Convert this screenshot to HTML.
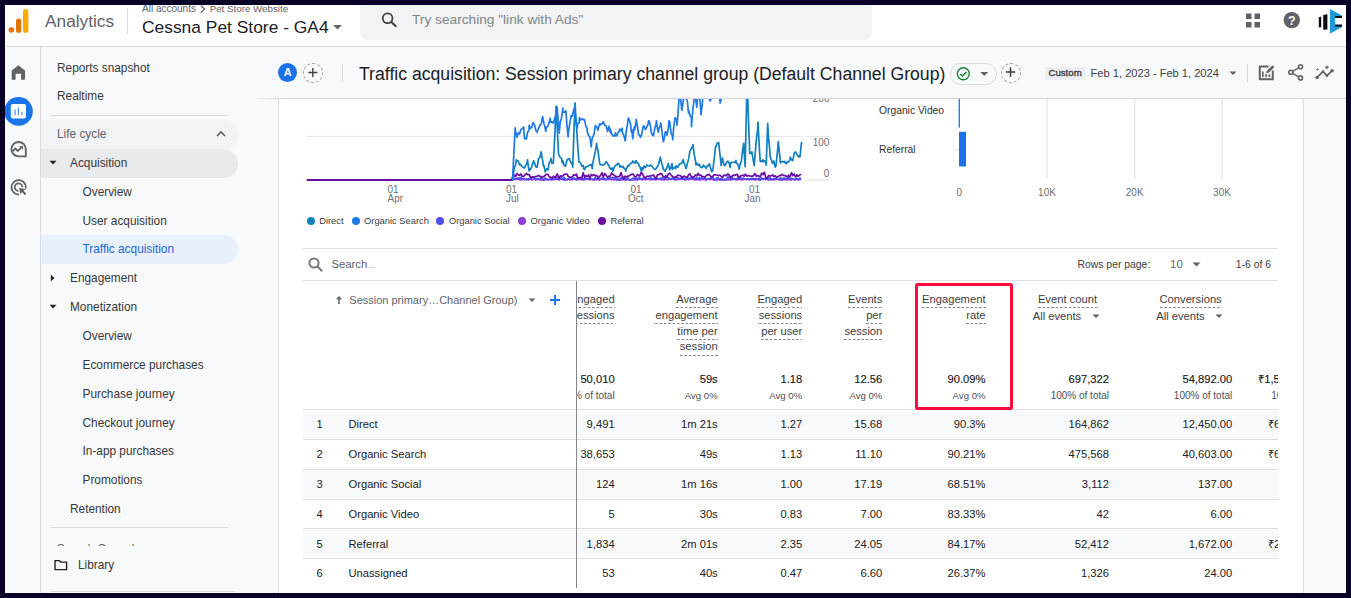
<!DOCTYPE html>
<html><head><meta charset="utf-8"><style>
html,body{margin:0;padding:0;}
body{width:1351px;height:598px;position:relative;overflow:hidden;background:#fff;font-family:"Liberation Sans",sans-serif;}
.t{position:absolute;white-space:nowrap;font-family:"Liberation Sans",sans-serif;}
svg{overflow:visible}
</style></head><body>
<div style="position:absolute;left:0;top:0;width:1351px;height:46px;background:#fff;"></div>
<div style="position:absolute;left:0;top:46px;width:1351px;height:1px;background:#dadce0;"></div>
<svg style="position:absolute;left:0;top:0" width="40" height="46">
<circle cx="11.3" cy="29.9" r="2.75" fill="#e37400"/>
<rect x="16" y="18.4" width="5.3" height="14.4" rx="2.65" fill="#e37400"/>
<rect x="23" y="8.9" width="5.4" height="24" rx="2.7" fill="#f9ab00"/>
</svg>
<div class="t" style="left:45px;top:10.00px;font-size:17.3px;line-height:22px;color:#5f6368;font-weight:normal;">Analytics</div>

<div style="position:absolute;left:127px;top:8px;width:1px;height:26px;background:#dadce0;"></div>
<div class="t" style="left:142px;top:3.00px;font-size:10px;line-height:12px;color:#5f6368;font-weight:normal;">All accounts</div>

<svg style="position:absolute;left:0;top:0" width="300" height="40"><path d="M200.9 5.8 L204.6 9.1 L200.9 12.4" fill="none" stroke="#5f6368" stroke-width="1.3"/></svg>
<div class="t" style="left:209.7px;top:3.00px;font-size:9.75px;line-height:12px;color:#5f6368;font-weight:normal;">Pet Store Website</div>

<div class="t" style="left:142px;top:15.50px;font-size:17.4px;line-height:22px;color:#202124;font-weight:normal;">Cessna Pet Store - GA4</div>

<svg style="position:absolute;left:333px;top:25px" width="10" height="6"><path d="M0 0h9l-4.5 4.5z" fill="#5f6368"/></svg>
<div style="position:absolute;left:360px;top:0px;width:512px;height:40px;background:#f1f3f4;border-radius:0 0 8px 8px;"></div>
<svg style="position:absolute;left:0;top:0" width="420" height="40"><circle cx="387.6" cy="18.3" r="4.9" fill="none" stroke="#3c4043" stroke-width="1.8"/><path d="M391.1 21.8 L395.7 26.3" stroke="#3c4043" stroke-width="1.9" stroke-linecap="round"/></svg>
<div class="t" style="left:412px;top:10.50px;font-size:13.7px;line-height:18px;color:#80868b;font-weight:normal;">Try searching "link with Ads"</div>

<svg style="position:absolute;left:1244px;top:11px" width="18" height="20">
<rect x="2" y="2.5" width="5.5" height="5.5" fill="#5f6368"/><rect x="10.5" y="2.5" width="5.5" height="5.5" fill="#5f6368"/>
<rect x="2" y="11" width="5.5" height="5.5" fill="#5f6368"/><rect x="10.5" y="11" width="5.5" height="5.5" fill="#5f6368"/></svg>
<svg style="position:absolute;left:1282px;top:10px" width="20" height="20">
<circle cx="9.8" cy="10.1" r="8.2" fill="#5f6368"/>
<text x="9.8" y="14.6" text-anchor="middle" font-family="Liberation Sans" font-weight="bold" font-size="12.5" fill="#fff">?</text></svg>
<svg style="position:absolute;left:1310px;top:5px" width="40" height="35">
<path d="M8.8 12.2 L11.2 11.4 L11.2 22.3 L8.8 22.6 Z" fill="#0d0a14"/>
<path d="M13.2 10.0 L17.4 9.2 L17.4 24.4 L13.2 24.8 Z" fill="#0d0a14"/>
<path d="M20 4 L32 10.5 L32 12.8 L25 12.8 L25 19.8 L32 19.8 L32 22 L20 28.7 Z" fill="#1e9bd7"/>
<rect x="25" y="11" width="7" height="2" fill="#0d0a14"/>
<rect x="25" y="19.6" width="7" height="2" fill="#0d0a14"/>
</svg>
<div style="position:absolute;left:0;top:47px;width:40px;height:551px;background:#f8f9fa;"></div>
<div style="position:absolute;left:40px;top:47px;width:1px;height:551px;background:#dadce0;"></div>
<svg style="position:absolute;left:0;top:0" width="40" height="200"><path fill="#5f6368" d="M18.35 65.2 L11.7 70.4 V79.8 H15.6 V73.8 H21.1 V79.8 H25 V70.4 Z"/></svg>
<svg style="position:absolute;left:0;top:0" width="40" height="200">
<circle cx="18.5" cy="111.4" r="14.3" fill="#1a73e8"/>
<rect x="10.8" y="103.9" width="15.2" height="14.5" rx="2" fill="#fff"/>
<rect x="14.5" y="109.6" width="1.2" height="5.5" fill="#4c8ff0"/>
<rect x="17.8" y="107.4" width="1.2" height="7.7" fill="#4c8ff0"/>
<rect x="21.3" y="111.8" width="1.2" height="3.3" fill="#4c8ff0"/></svg>
<svg style="position:absolute;left:0;top:0" width="40" height="200">
<path d="M25.8 149.2 A7.2 7.2 0 1 0 18.6 156.4 H25.8 Z" fill="none" stroke="#5f6368" stroke-width="1.9" stroke-linejoin="round"/>
<path d="M12.6 151.4 L15.3 148.6 L17.8 151 L21.2 147.6" fill="none" stroke="#5f6368" stroke-width="1.8"/>
<path d="M19.2 146 H22.9 V149.7 Z" fill="#5f6368"/></svg>
<svg style="position:absolute;left:0;top:0" width="40" height="200">
<path d="M25.8 188.6 A7.2 7.2 0 1 0 18.9 194.5" fill="none" stroke="#5f6368" stroke-width="1.8"/>
<path d="M22.4 187.2 A3.8 3.8 0 1 0 18.3 191" fill="none" stroke="#5f6368" stroke-width="1.8"/>
<path d="M19 187.7 L26.4 189.4 L23.4 190.6 L26.3 193.8 L25 195.2 L22 192 L20.6 194.6 Z" fill="#5f6368"/></svg>
<div style="position:absolute;left:41px;top:47px;width:237px;height:551px;background:#f8f9fa;"></div>
<div style="position:absolute;left:278px;top:98px;width:1px;height:500px;background:#dadce0;"></div>
<div class="t" style="left:57px;top:60.00px;font-size:11.85px;line-height:16px;color:#36383b;font-weight:normal;">Reports snapshot</div>

<div class="t" style="left:57px;top:88.00px;font-size:11.85px;line-height:16px;color:#36383b;font-weight:normal;">Realtime</div>

<div style="position:absolute;left:51px;top:115px;width:177px;height:1px;background:#dadce0;"></div>
<div style="position:absolute;left:41px;top:120px;width:197px;height:28.5px;background:#f1f3f4;border-radius:0 15px 15px 0;"></div>
<div class="t" style="left:57px;top:126.00px;font-size:11.85px;line-height:16px;color:#5f6368;font-weight:normal;">Life cycle</div>

<svg style="position:absolute;left:215px;top:129px" width="12" height="9"><path d="M2 7 L6 3 L10 7" fill="none" stroke="#5f6368" stroke-width="1.6"/></svg>
<div style="position:absolute;left:41px;top:149px;width:197px;height:28.5px;background:#e8eaed;border-radius:0 15px 15px 0;"></div>
<svg style="position:absolute;left:49px;top:160px" width="8" height="6"><path d="M0.5 0.8h7l-3.5 3.7z" fill="#202124"/></svg>
<div class="t" style="left:70px;top:155.00px;font-size:11.85px;line-height:16px;color:#36383b;font-weight:normal;">Acquisition</div>

<div class="t" style="left:82.5px;top:184.00px;font-size:11.85px;line-height:16px;color:#36383b;font-weight:normal;">Overview</div>

<div class="t" style="left:82.5px;top:213.00px;font-size:11.85px;line-height:16px;color:#36383b;font-weight:normal;">User acquisition</div>

<div style="position:absolute;left:41px;top:235px;width:197px;height:28.5px;background:#e8f0fe;border-radius:0 15px 15px 0;"></div>
<div class="t" style="left:82.5px;top:241.00px;font-size:11.85px;line-height:16px;color:#1967d2;font-weight:normal;">Traffic acquisition</div>

<svg style="position:absolute;left:50px;top:274px" width="6" height="8"><path d="M0.8 0.5v7l3.7-3.5z" fill="#202124"/></svg>
<div class="t" style="left:70px;top:270.00px;font-size:11.85px;line-height:16px;color:#36383b;font-weight:normal;">Engagement</div>

<svg style="position:absolute;left:49px;top:304px" width="8" height="6"><path d="M0.5 0.8h7l-3.5 3.7z" fill="#202124"/></svg>
<div class="t" style="left:70px;top:299.00px;font-size:11.85px;line-height:16px;color:#36383b;font-weight:normal;">Monetization</div>

<div class="t" style="left:82.5px;top:328.00px;font-size:11.85px;line-height:16px;color:#36383b;font-weight:normal;">Overview</div>

<div class="t" style="left:82.5px;top:356.85px;font-size:11.85px;line-height:16px;color:#36383b;font-weight:normal;">Ecommerce purchases</div>

<div class="t" style="left:82.5px;top:385.70px;font-size:11.85px;line-height:16px;color:#36383b;font-weight:normal;">Purchase journey</div>

<div class="t" style="left:82.5px;top:414.55px;font-size:11.85px;line-height:16px;color:#36383b;font-weight:normal;">Checkout journey</div>

<div class="t" style="left:82.5px;top:443.40px;font-size:11.85px;line-height:16px;color:#36383b;font-weight:normal;">In-app purchases</div>

<div class="t" style="left:82.5px;top:472.25px;font-size:11.85px;line-height:16px;color:#36383b;font-weight:normal;">Promotions</div>

<div class="t" style="left:70px;top:501.00px;font-size:11.85px;line-height:16px;color:#36383b;font-weight:normal;">Retention</div>

<div style="position:absolute;left:51px;top:527px;width:177px;height:1px;background:#dadce0;"></div>
<div style="position:absolute;left:41px;top:530px;width:237px;height:16.3px;overflow:hidden;"><div class="t" style="left:15.7px;top:11.30px;font-size:11.85px;line-height:16px;color:#5f6368;font-weight:normal;">Search Console</div>
</div>
<svg style="position:absolute;left:53px;top:558px" width="16" height="14" viewBox="0 0 16 14"><path d="M2 2.6 H6.3 L7.8 4.1 H13.6 V11.6 H2 Z" fill="none" stroke="#202124" stroke-width="1.4" stroke-linejoin="round"/></svg>
<div class="t" style="left:78px;top:556.50px;font-size:11.85px;line-height:16px;color:#36383b;font-weight:normal;">Library</div>

<div style="position:absolute;left:51px;top:591px;width:184px;height:1px;background:#dadce0;"></div>
<div style="position:absolute;left:279px;top:98px;width:1024px;height:500px;background:#fff;"></div>
<div style="position:absolute;left:1303px;top:98px;width:1px;height:500px;background:#dadce0;"></div>
<div style="position:absolute;left:1304px;top:98px;width:47px;height:500px;background:#f8f9fa;"></div>
<svg style="position:absolute;left:0;top:0" width="1351" height="598">
<defs><clipPath id="cc"><rect x="300" y="98" width="510" height="90"/></clipPath></defs>
<line x1="306.7" y1="136.3" x2="801.5" y2="136.3" stroke="#e0e0e0" stroke-width="1"/>
<line x1="805" y1="136.3" x2="829.5" y2="136.3" stroke="#e0e0e0" stroke-width="1"/>
<line x1="805" y1="180.2" x2="829.5" y2="180.2" stroke="#e0e0e0" stroke-width="1"/>
<line x1="805" y1="98.5" x2="829.5" y2="98.5" stroke="#e0e0e0" stroke-width="1"/>
<g stroke="#e0e0e0" stroke-width="1"><line x1="387.5" y1="180" x2="387.5" y2="184"/><line x1="511" y1="180" x2="511" y2="184"/><line x1="635" y1="180" x2="635" y2="184"/><line x1="759" y1="180" x2="759" y2="184"/></g>
<g clip-path="url(#cc)" fill="none" stroke-linejoin="round" stroke-width="1.7">
<polyline points="307.2,180.0 308.6,180.0 309.9,180.0 311.3,180.0 312.6,180.0 314.0,180.0 315.3,180.0 316.7,180.0 318.0,180.0 319.4,180.0 320.7,180.0 322.1,180.0 323.4,180.0 324.8,180.0 326.1,180.0 327.5,180.0 328.8,180.0 330.2,180.0 331.5,180.0 332.9,180.0 334.3,180.0 335.6,180.0 337.0,180.0 338.3,180.0 339.7,180.0 341.0,180.0 342.4,180.0 343.7,180.0 345.1,180.0 346.4,180.0 347.8,180.0 349.1,180.0 350.5,180.0 351.8,180.0 353.2,180.0 354.5,180.0 355.9,180.0 357.2,180.0 358.6,180.0 360.0,180.0 361.3,180.0 362.7,180.0 364.0,180.0 365.4,180.0 366.7,180.0 368.1,180.0 369.4,180.0 370.8,180.0 372.1,180.0 373.5,180.0 374.8,180.0 376.2,180.0 377.5,180.0 378.9,180.0 380.2,180.0 381.6,180.0 383.0,180.0 384.3,180.0 385.7,180.0 387.0,180.0 388.4,180.0 389.7,180.0 391.1,180.0 392.4,180.0 393.8,180.0 395.1,180.0 396.5,180.0 397.8,180.0 399.2,180.0 400.5,180.0 401.9,180.0 403.2,180.0 404.6,180.0 405.9,180.0 407.3,180.0 408.7,180.0 410.0,180.0 411.4,180.0 412.7,180.0 414.1,180.0 415.4,180.0 416.8,180.0 418.1,180.0 419.5,180.0 420.8,180.0 422.2,180.0 423.5,180.0 424.9,180.0 426.2,180.0 427.6,180.0 428.9,180.0 430.3,180.0 431.6,180.0 433.0,180.0 434.4,180.0 435.7,180.0 437.1,180.0 438.4,180.0 439.8,180.0 441.1,180.0 442.5,180.0 443.8,180.0 445.2,180.0 446.5,180.0 447.9,180.0 449.2,180.0 450.6,180.0 451.9,180.0 453.3,180.0 454.6,180.0 456.0,180.0 457.3,180.0 458.7,180.0 460.1,180.0 461.4,180.0 462.8,180.0 464.1,180.0 465.5,180.0 466.8,180.0 468.2,180.0 469.5,180.0 470.9,180.0 472.2,180.0 473.6,180.0 474.9,180.0 476.3,180.0 477.6,180.0 479.0,180.0 480.3,180.0 481.7,180.0 483.1,180.0 484.4,180.0 485.8,180.0 487.1,180.0 488.5,180.0 489.8,180.0 491.2,180.0 492.5,180.0 493.9,180.0 495.2,180.0 496.6,180.0 497.9,180.0 499.3,180.0 500.6,180.0 502.0,180.0 503.3,180.0 504.7,180.0 506.0,180.0 507.4,180.0 508.8,180.0 510.1,180.0 511.5,180.0 512.8,179.4 514.2,179.6 515.5,179.2 516.9,179.2 518.2,179.2 519.6,179.8 520.9,180.0 522.3,179.3 523.6,179.5 525.0,179.7 526.3,179.4 527.7,179.7 529.0,179.8 530.4,178.9 531.7,180.0 533.1,179.3 534.5,179.2 535.8,178.9 537.2,179.5 538.5,179.4 539.9,179.9 541.2,179.6 542.6,180.0 543.9,179.8 545.3,179.6 546.6,179.6 548.0,179.7 549.3,179.2 550.7,180.0 552.0,179.5 553.4,179.7 554.7,179.5 556.1,179.5 557.4,178.9 558.8,179.9 560.2,179.1 561.5,179.1 562.9,179.6 564.2,179.8 565.6,180.0 566.9,179.9 568.3,178.9 569.6,180.0 571.0,179.4 572.3,179.8 573.7,178.9 575.0,179.5 576.4,180.0 577.7,179.7 579.1,179.5 580.4,179.5 581.8,179.9 583.2,179.7 584.5,179.7 585.9,179.4 587.2,179.5 588.6,179.5 589.9,179.8 591.3,179.3 592.6,179.8 594.0,179.9 595.3,179.7 596.7,179.7 598.0,179.7 599.4,180.0 600.7,179.1 602.1,179.3 603.4,179.1 604.8,179.7 606.1,179.3 607.5,179.5 608.9,179.6 610.2,178.9 611.6,179.8 612.9,179.4 614.3,180.0 615.6,179.4 617.0,179.6 618.3,179.9 619.7,179.8 621.0,180.0 622.4,179.9 623.7,179.5 625.1,180.0 626.4,179.2 627.8,179.2 629.1,179.8 630.5,180.0 631.8,180.0 633.2,180.0 634.6,179.8 635.9,178.8 637.3,180.0 638.6,179.3 640.0,179.1 641.3,179.9 642.7,179.7 644.0,179.3 645.4,179.8 646.7,179.1 648.1,178.8 649.4,179.6 650.8,179.8 652.1,179.4 653.5,179.4 654.8,179.8 656.2,179.6 657.5,179.5 658.9,179.4 660.3,179.2 661.6,179.7 663.0,180.0 664.3,180.0 665.7,178.9 667.0,179.7 668.4,179.7 669.7,178.7 671.1,179.2 672.4,178.8 673.8,179.6 675.1,179.8 676.5,179.7 677.8,179.3 679.2,179.4 680.5,179.4 681.9,178.8 683.3,179.1 684.6,179.9 686.0,179.4 687.3,179.4 688.7,179.8 690.0,178.8 691.4,179.2 692.7,179.0 694.1,179.7 695.4,180.0 696.8,179.3 698.1,179.6 699.5,179.8 700.8,179.6 702.2,179.5 703.5,179.5 704.9,179.6 706.2,179.4 707.6,178.5 709.0,179.2 710.3,179.7 711.7,178.9 713.0,179.7 714.4,180.0 715.7,180.0 717.1,180.0 718.4,179.2 719.8,179.9 721.1,180.0 722.5,179.8 723.8,179.6 725.2,180.0 726.5,179.8 727.9,179.6 729.2,179.3 730.6,179.9 731.9,179.4 733.3,179.5 734.7,179.4 736.0,179.8 737.4,180.0 738.7,179.2 740.1,179.4 741.4,179.8 742.8,179.8 744.1,179.3 745.5,178.9 746.8,179.4 748.2,178.7 749.5,179.5 750.9,179.4 752.2,179.4 753.6,179.2 754.9,180.0 756.3,179.5 757.6,179.1 759.0,180.0 760.4,179.5 761.7,179.3 763.1,179.0 764.4,179.0 765.8,179.6 767.1,178.8 768.5,180.0 769.8,180.0 771.2,179.1 772.5,179.3 773.9,180.0 775.2,179.2 776.6,179.3 777.9,179.3 779.3,179.7 780.6,180.0 782.0,180.0 783.4,179.6 784.7,179.6 786.1,179.7 787.4,179.8 788.8,179.2 790.1,180.0 791.5,179.8 792.8,178.9 794.2,179.8 795.5,179.8 796.9,179.2 798.2,180.0 799.6,179.0 800.9,180.0" stroke="#9334e6"/>
<polyline points="307.2,180.0 308.6,180.0 309.9,180.0 311.3,180.0 312.6,180.0 314.0,180.0 315.3,180.0 316.7,180.0 318.0,180.0 319.4,180.0 320.7,180.0 322.1,180.0 323.4,180.0 324.8,180.0 326.1,180.0 327.5,180.0 328.8,180.0 330.2,180.0 331.5,180.0 332.9,180.0 334.3,180.0 335.6,180.0 337.0,180.0 338.3,180.0 339.7,180.0 341.0,180.0 342.4,180.0 343.7,180.0 345.1,180.0 346.4,180.0 347.8,180.0 349.1,180.0 350.5,180.0 351.8,180.0 353.2,180.0 354.5,180.0 355.9,180.0 357.2,180.0 358.6,180.0 360.0,180.0 361.3,180.0 362.7,180.0 364.0,180.0 365.4,180.0 366.7,180.0 368.1,180.0 369.4,180.0 370.8,180.0 372.1,180.0 373.5,180.0 374.8,180.0 376.2,180.0 377.5,180.0 378.9,180.0 380.2,180.0 381.6,180.0 383.0,180.0 384.3,180.0 385.7,180.0 387.0,180.0 388.4,180.0 389.7,180.0 391.1,180.0 392.4,180.0 393.8,180.0 395.1,180.0 396.5,180.0 397.8,180.0 399.2,180.0 400.5,180.0 401.9,180.0 403.2,180.0 404.6,180.0 405.9,180.0 407.3,180.0 408.7,180.0 410.0,180.0 411.4,180.0 412.7,180.0 414.1,180.0 415.4,180.0 416.8,180.0 418.1,180.0 419.5,180.0 420.8,180.0 422.2,180.0 423.5,180.0 424.9,180.0 426.2,180.0 427.6,180.0 428.9,180.0 430.3,180.0 431.6,180.0 433.0,180.0 434.4,180.0 435.7,180.0 437.1,180.0 438.4,180.0 439.8,180.0 441.1,180.0 442.5,180.0 443.8,180.0 445.2,180.0 446.5,180.0 447.9,180.0 449.2,180.0 450.6,180.0 451.9,180.0 453.3,180.0 454.6,180.0 456.0,180.0 457.3,180.0 458.7,180.0 460.1,180.0 461.4,180.0 462.8,180.0 464.1,180.0 465.5,180.0 466.8,180.0 468.2,180.0 469.5,180.0 470.9,180.0 472.2,180.0 473.6,180.0 474.9,180.0 476.3,180.0 477.6,180.0 479.0,180.0 480.3,180.0 481.7,180.0 483.1,180.0 484.4,180.0 485.8,180.0 487.1,180.0 488.5,180.0 489.8,180.0 491.2,180.0 492.5,180.0 493.9,180.0 495.2,180.0 496.6,180.0 497.9,180.0 499.3,180.0 500.6,180.0 502.0,180.0 503.3,180.0 504.7,180.0 506.0,180.0 507.4,180.0 508.8,180.0 510.1,180.0 511.5,180.0 512.8,178.7 514.2,178.3 515.5,179.1 516.9,178.4 518.2,177.9 519.6,178.3 520.9,177.3 522.3,179.5 523.6,178.6 525.0,179.3 526.3,179.4 527.7,178.8 529.0,178.5 530.4,178.3 531.7,178.2 533.1,176.7 534.5,177.9 535.8,180.0 537.2,178.5 538.5,179.2 539.9,179.1 541.2,177.5 542.6,178.9 543.9,180.0 545.3,178.4 546.6,178.9 548.0,179.7 549.3,179.5 550.7,179.2 552.0,178.7 553.4,179.1 554.7,178.6 556.1,177.1 557.4,179.4 558.8,179.4 560.2,178.9 561.5,177.7 562.9,179.3 564.2,177.4 565.6,179.8 566.9,179.6 568.3,178.7 569.6,179.4 571.0,179.2 572.3,178.3 573.7,178.1 575.0,178.6 576.4,178.9 577.7,177.5 579.1,178.3 580.4,178.9 581.8,177.6 583.2,179.5 584.5,178.5 585.9,178.1 587.2,178.7 588.6,179.2 589.9,178.4 591.3,179.2 592.6,179.2 594.0,179.6 595.3,177.5 596.7,179.2 598.0,177.7 599.4,178.4 600.7,178.9 602.1,178.1 603.4,178.5 604.8,178.6 606.1,179.9 607.5,178.6 608.9,177.9 610.2,178.3 611.6,177.8 612.9,177.4 614.3,178.3 615.6,177.0 617.0,180.0 618.3,178.9 619.7,180.0 621.0,178.0 622.4,178.6 623.7,177.2 625.1,179.0 626.4,180.0 627.8,177.6 629.1,179.9 630.5,179.8 631.8,178.8 633.2,178.1 634.6,179.1 635.9,178.5 637.3,180.0 638.6,177.2 640.0,178.7 641.3,178.6 642.7,178.2 644.0,178.5 645.4,178.5 646.7,179.5 648.1,178.8 649.4,178.3 650.8,177.8 652.1,178.8 653.5,178.6 654.8,178.4 656.2,178.2 657.5,178.5 658.9,178.9 660.3,179.1 661.6,177.7 663.0,178.4 664.3,178.7 665.7,175.6 667.0,177.9 668.4,177.9 669.7,178.6 671.1,179.6 672.4,177.7 673.8,178.8 675.1,178.6 676.5,177.8 677.8,177.8 679.2,178.5 680.5,178.7 681.9,176.9 683.3,178.2 684.6,179.6 686.0,178.0 687.3,178.6 688.7,178.7 690.0,178.1 691.4,178.5 692.7,176.9 694.1,178.5 695.4,178.5 696.8,177.7 698.1,179.2 699.5,177.8 700.8,178.7 702.2,177.7 703.5,179.4 704.9,178.3 706.2,180.0 707.6,179.1 709.0,178.7 710.3,178.3 711.7,177.0 713.0,177.1 714.4,179.9 715.7,179.4 717.1,177.6 718.4,178.3 719.8,179.9 721.1,178.3 722.5,179.7 723.8,179.4 725.2,179.8 726.5,178.9 727.9,176.7 729.2,178.4 730.6,178.8 731.9,176.5 733.3,179.1 734.7,178.8 736.0,178.9 737.4,178.3 738.7,179.0 740.1,177.4 741.4,178.9 742.8,178.2 744.1,178.5 745.5,179.4 746.8,179.5 748.2,178.7 749.5,180.0 750.9,178.7 752.2,178.6 753.6,178.6 754.9,178.8 756.3,178.4 757.6,179.0 759.0,178.1 760.4,180.0 761.7,177.9 763.1,179.5 764.4,178.3 765.8,179.1 767.1,179.1 768.5,179.4 769.8,177.5 771.2,179.6 772.5,179.7 773.9,178.5 775.2,178.5 776.6,178.7 777.9,179.5 779.3,179.3 780.6,177.9 782.0,179.6 783.4,178.2 784.7,178.1 786.1,178.6 787.4,179.7 788.8,177.0 790.1,178.6 791.5,178.5 792.8,179.0 794.2,179.5 795.5,178.9 796.9,178.5 798.2,179.4 799.6,178.6 800.9,177.7" stroke="#4f4ef2"/>
<polyline points="307.2,180.0 308.6,180.0 309.9,180.0 311.3,180.0 312.6,180.0 314.0,180.0 315.3,180.0 316.7,180.0 318.0,180.0 319.4,180.0 320.7,180.0 322.1,180.0 323.4,180.0 324.8,180.0 326.1,180.0 327.5,180.0 328.8,180.0 330.2,180.0 331.5,180.0 332.9,180.0 334.3,180.0 335.6,180.0 337.0,180.0 338.3,180.0 339.7,180.0 341.0,180.0 342.4,180.0 343.7,180.0 345.1,180.0 346.4,180.0 347.8,180.0 349.1,180.0 350.5,180.0 351.8,180.0 353.2,180.0 354.5,180.0 355.9,180.0 357.2,180.0 358.6,180.0 360.0,180.0 361.3,180.0 362.7,180.0 364.0,180.0 365.4,180.0 366.7,180.0 368.1,180.0 369.4,180.0 370.8,180.0 372.1,180.0 373.5,180.0 374.8,180.0 376.2,180.0 377.5,180.0 378.9,180.0 380.2,180.0 381.6,180.0 383.0,180.0 384.3,180.0 385.7,180.0 387.0,180.0 388.4,180.0 389.7,180.0 391.1,180.0 392.4,180.0 393.8,180.0 395.1,180.0 396.5,180.0 397.8,180.0 399.2,180.0 400.5,180.0 401.9,180.0 403.2,180.0 404.6,180.0 405.9,180.0 407.3,180.0 408.7,180.0 410.0,180.0 411.4,180.0 412.7,180.0 414.1,180.0 415.4,180.0 416.8,180.0 418.1,180.0 419.5,180.0 420.8,180.0 422.2,180.0 423.5,180.0 424.9,180.0 426.2,180.0 427.6,180.0 428.9,180.0 430.3,180.0 431.6,180.0 433.0,180.0 434.4,180.0 435.7,180.0 437.1,180.0 438.4,180.0 439.8,180.0 441.1,180.0 442.5,180.0 443.8,180.0 445.2,180.0 446.5,180.0 447.9,180.0 449.2,180.0 450.6,180.0 451.9,180.0 453.3,180.0 454.6,180.0 456.0,180.0 457.3,180.0 458.7,180.0 460.1,180.0 461.4,180.0 462.8,180.0 464.1,180.0 465.5,180.0 466.8,180.0 468.2,180.0 469.5,180.0 470.9,180.0 472.2,180.0 473.6,180.0 474.9,180.0 476.3,180.0 477.6,180.0 479.0,180.0 480.3,180.0 481.7,180.0 483.1,180.0 484.4,180.0 485.8,180.0 487.1,180.0 488.5,180.0 489.8,180.0 491.2,180.0 492.5,180.0 493.9,180.0 495.2,180.0 496.6,180.0 497.9,180.0 499.3,180.0 500.6,180.0 502.0,180.0 503.3,180.0 504.7,180.0 506.0,180.0 507.4,180.0 508.8,180.0 510.1,180.0 511.5,180.0 512.8,176.6 514.2,175.1 515.5,176.6 516.9,173.7 518.2,174.8 519.6,175.4 520.9,174.0 522.3,176.5 523.6,176.5 525.0,174.8 526.3,173.5 527.7,174.6 529.0,174.5 530.4,177.2 531.7,177.1 533.1,177.0 534.5,177.1 535.8,176.4 537.2,176.3 538.5,175.4 539.9,176.3 541.2,177.0 542.6,176.4 543.9,177.1 545.3,174.9 546.6,174.3 548.0,174.3 549.3,177.0 550.7,177.1 552.0,178.7 553.4,176.2 554.7,177.2 556.1,176.1 557.4,174.0 558.8,178.5 560.2,175.8 561.5,176.1 562.9,176.0 564.2,174.3 565.6,174.0 566.9,174.0 568.3,176.4 569.6,177.3 571.0,177.1 572.3,176.7 573.7,174.8 575.0,175.4 576.4,174.0 577.7,178.1 579.1,177.9 580.4,177.5 581.8,177.9 583.2,172.7 584.5,177.2 585.9,175.5 587.2,176.7 588.6,174.9 589.9,178.7 591.3,174.5 592.6,175.6 594.0,174.7 595.3,175.9 596.7,175.4 598.0,177.9 599.4,176.6 600.7,175.2 602.1,172.8 603.4,177.2 604.8,173.5 606.1,175.1 607.5,177.2 608.9,176.2 610.2,176.1 611.6,173.0 612.9,174.3 614.3,175.4 615.6,176.4 617.0,176.9 618.3,176.7 619.7,176.6 621.0,172.5 622.4,176.7 623.7,179.1 625.1,176.2 626.4,176.9 627.8,176.1 629.1,175.9 630.5,174.9 631.8,174.2 633.2,174.1 634.6,176.6 635.9,177.1 637.3,174.4 638.6,175.1 640.0,175.9 641.3,172.0 642.7,174.3 644.0,176.7 645.4,178.0 646.7,176.2 648.1,176.5 649.4,175.9 650.8,176.0 652.1,175.7 653.5,174.9 654.8,177.2 656.2,178.1 657.5,174.9 658.9,174.7 660.3,173.6 661.6,173.8 663.0,176.3 664.3,176.9 665.7,176.5 667.0,176.9 668.4,174.0 669.7,173.1 671.1,175.0 672.4,176.4 673.8,177.0 675.1,177.3 676.5,176.5 677.8,175.2 679.2,175.5 680.5,175.6 681.9,177.8 683.3,176.3 684.6,176.4 686.0,176.9 687.3,177.3 688.7,174.6 690.0,173.9 691.4,176.9 692.7,177.2 694.1,177.1 695.4,174.9 696.8,175.8 698.1,173.5 699.5,175.5 700.8,175.1 702.2,176.7 703.5,176.7 704.9,177.2 706.2,175.5 707.6,174.9 709.0,174.4 710.3,175.8 711.7,177.5 713.0,176.0 714.4,174.6 715.7,174.9 717.1,175.0 718.4,175.6 719.8,175.2 721.1,176.1 722.5,177.5 723.8,175.2 725.2,175.3 726.5,175.4 727.9,173.8 729.2,175.2 730.6,177.5 731.9,176.4 733.3,175.1 734.7,175.5 736.0,174.7 737.4,174.4 738.7,178.1 740.1,176.3 741.4,175.7 742.8,175.1 744.1,176.2 745.5,174.2 746.8,176.1 748.2,175.5 749.5,176.0 750.9,176.2 752.2,176.5 753.6,175.4 754.9,173.6 756.3,176.1 757.6,175.6 759.0,176.1 760.4,176.8 761.7,173.0 763.1,174.7 764.4,172.2 765.8,177.4 767.1,178.6 768.5,175.6 769.8,175.8 771.2,176.0 772.5,174.8 773.9,176.6 775.2,175.8 776.6,177.2 777.9,176.9 779.3,175.5 780.6,175.6 782.0,174.4 783.4,175.3 784.7,175.6 786.1,176.0 787.4,177.0 788.8,175.1 790.1,176.6 791.5,172.7 792.8,175.6 794.2,174.0 795.5,176.9 796.9,174.9 798.2,176.3 799.6,175.2 800.9,174.0" stroke="#6a0ea2"/>
<polyline points="307.2,180.0 308.6,180.0 309.9,180.0 311.3,180.0 312.6,180.0 314.0,180.0 315.3,180.0 316.7,180.0 318.0,180.0 319.4,180.0 320.7,180.0 322.1,180.0 323.4,180.0 324.8,180.0 326.1,180.0 327.5,180.0 328.8,180.0 330.2,180.0 331.5,180.0 332.9,180.0 334.3,180.0 335.6,180.0 337.0,180.0 338.3,180.0 339.7,180.0 341.0,180.0 342.4,180.0 343.7,180.0 345.1,180.0 346.4,180.0 347.8,180.0 349.1,180.0 350.5,180.0 351.8,180.0 353.2,180.0 354.5,180.0 355.9,180.0 357.2,180.0 358.6,180.0 360.0,180.0 361.3,180.0 362.7,180.0 364.0,180.0 365.4,180.0 366.7,180.0 368.1,180.0 369.4,180.0 370.8,180.0 372.1,180.0 373.5,180.0 374.8,180.0 376.2,180.0 377.5,180.0 378.9,180.0 380.2,180.0 381.6,180.0 383.0,180.0 384.3,180.0 385.7,180.0 387.0,180.0 388.4,180.0 389.7,180.0 391.1,180.0 392.4,180.0 393.8,180.0 395.1,180.0 396.5,180.0 397.8,180.0 399.2,180.0 400.5,180.0 401.9,180.0 403.2,180.0 404.6,180.0 405.9,180.0 407.3,180.0 408.7,180.0 410.0,180.0 411.4,180.0 412.7,180.0 414.1,180.0 415.4,180.0 416.8,180.0 418.1,180.0 419.5,180.0 420.8,180.0 422.2,180.0 423.5,180.0 424.9,180.0 426.2,180.0 427.6,180.0 428.9,180.0 430.3,180.0 431.6,180.0 433.0,180.0 434.4,180.0 435.7,180.0 437.1,180.0 438.4,180.0 439.8,180.0 441.1,180.0 442.5,180.0 443.8,180.0 445.2,180.0 446.5,180.0 447.9,180.0 449.2,180.0 450.6,180.0 451.9,180.0 453.3,180.0 454.6,180.0 456.0,180.0 457.3,180.0 458.7,180.0 460.1,180.0 461.4,180.0 462.8,180.0 464.1,180.0 465.5,180.0 466.8,180.0 468.2,180.0 469.5,180.0 470.9,180.0 472.2,180.0 473.6,180.0 474.9,180.0 476.3,180.0 477.6,180.0 479.0,180.0 480.3,180.0 481.7,180.0 483.1,180.0 484.4,180.0 485.8,180.0 487.1,180.0 488.5,180.0 489.8,180.0 491.2,180.0 492.5,180.0 493.9,180.0 495.2,180.0 496.6,180.0 497.9,180.0 499.3,180.0 500.6,180.0 502.0,180.0 503.3,180.0 504.7,180.0 506.0,180.0 507.4,180.0 508.8,180.0 510.1,180.0 511.5,180.0 512.5,180.0 512.8,178.4 514.2,168.1 515.5,165.3 516.3,159.8 516.9,160.6 518.2,160.8 519.6,164.9 520.0,163.9 520.9,165.1 522.3,166.8 523.6,167.6 524.6,168.0 525.0,166.8 526.3,164.6 527.6,159.8 527.7,161.5 529.0,170.9 529.8,168.8 530.4,169.5 531.7,166.8 533.1,162.1 533.6,160.9 534.5,163.0 535.8,166.8 536.6,167.1 537.2,167.2 538.5,158.8 539.9,157.4 541.1,151.9 541.2,152.2 542.6,160.4 543.4,165.9 543.9,165.4 545.3,172.0 546.6,168.7 547.9,169.9 548.0,169.9 549.3,162.4 550.7,160.4 550.9,158.4 552.0,163.5 553.2,163.2 553.4,161.9 554.7,137.4 556.1,106.0 556.2,106.3 557.4,131.8 558.4,152.0 558.8,154.9 560.2,157.3 561.5,158.1 562.2,162.9 562.9,160.9 564.2,165.9 565.2,165.2 565.6,166.1 566.9,160.2 568.3,158.8 569.6,158.7 569.7,160.4 571.0,162.3 572.3,164.8 572.7,167.1 573.7,138.6 575.0,102.8 576.4,125.3 577.7,145.4 578.8,160.3 579.1,162.2 580.4,162.5 581.8,166.1 583.2,165.5 584.0,169.2 584.5,169.7 585.9,166.9 587.2,166.6 588.6,165.7 589.9,165.1 591.3,164.4 592.3,168.6 592.6,164.4 594.0,157.7 595.3,151.4 596.7,143.3 596.8,145.6 598.0,151.0 599.4,161.4 599.9,164.3 600.7,164.7 602.1,164.9 603.4,165.1 604.8,163.9 606.1,161.6 607.4,163.0 607.5,163.4 608.9,165.7 610.2,168.9 611.6,169.3 611.9,167.8 612.9,171.2 614.3,167.0 615.6,165.4 617.0,164.9 617.9,163.3 618.3,163.4 619.7,165.2 620.0,167.0 621.0,166.1 622.4,167.3 623.0,166.3 623.7,167.9 625.1,169.2 626.0,171.1 626.4,168.9 627.8,165.7 629.0,165.9 629.1,165.2 630.5,163.4 631.8,163.1 632.8,160.9 633.2,161.7 634.6,163.2 635.8,162.6 635.9,160.5 637.3,162.6 638.6,163.9 638.8,165.3 640.0,166.9 641.3,171.0 641.8,167.7 642.7,169.9 644.0,166.0 645.4,167.6 646.3,166.1 646.7,165.0 648.1,165.7 649.4,166.1 650.8,165.0 652.1,166.3 652.4,166.8 653.5,168.3 654.8,169.5 655.4,169.3 656.2,168.5 657.5,166.6 658.4,164.6 658.9,163.3 660.3,157.0 661.6,163.1 662.9,167.0 663.0,168.6 664.3,170.2 665.2,171.4 665.7,169.8 667.0,167.6 668.2,163.6 668.4,164.2 669.7,169.8 671.1,167.0 672.0,163.5 672.4,169.2 673.8,167.8 675.1,167.0 675.7,168.6 676.5,165.7 677.8,167.3 678.7,165.9 679.2,164.1 680.5,163.7 681.9,162.9 683.2,159.6 683.3,160.3 684.6,164.2 686.0,168.6 686.2,168.3 687.3,163.9 688.7,158.4 690.0,150.9 691.4,148.3 692.7,146.0 693.0,144.6 694.1,153.8 695.4,160.7 696.0,165.0 696.8,163.2 698.1,165.3 699.5,164.3 699.8,165.3 700.8,167.4 702.2,167.7 703.5,165.0 703.6,166.0 704.9,166.5 706.2,168.5 706.6,166.5 707.6,166.1 709.0,164.4 709.6,163.9 710.3,167.0 711.7,171.8 712.6,171.2 713.0,168.5 714.4,157.4 715.6,146.0 715.7,147.2 717.1,143.3 718.4,143.3 718.6,142.4 719.8,153.1 721.0,163.2 721.1,165.6 722.5,157.9 722.6,158.9 723.8,164.4 724.8,165.6 725.2,165.4 726.5,162.4 727.9,161.1 729.2,163.4 730.1,167.3 730.6,162.7 731.9,162.3 733.3,162.5 734.7,162.2 736.0,160.5 736.1,163.2 737.4,163.6 738.7,167.0 739.1,169.1 740.1,164.4 741.4,160.7 742.8,148.9 743.7,143.4 744.1,151.9 745.2,166.8 745.5,151.0 746.8,93.2 747.1,80.7 748.2,112.1 749.5,146.7 749.7,153.5 750.9,153.4 751.9,151.8 752.2,154.1 753.6,162.3 754.2,165.7 754.9,157.2 756.3,140.0 757.6,129.4 758.0,122.2 759.0,142.2 760.2,161.5 760.4,160.2 761.7,161.6 763.1,159.9 763.2,161.7 764.4,160.8 765.8,162.2 766.2,165.1 767.1,139.1 767.7,123.3 768.5,137.4 769.8,150.3 770.0,156.0 771.2,159.2 772.3,162.9 772.5,163.3 773.9,161.0 775.2,167.2 776.0,165.6 776.6,159.8 777.9,146.6 778.3,141.5 779.3,151.9 780.5,163.0 780.6,162.7 782.0,161.5 783.4,161.6 784.3,162.3 784.7,161.3 786.1,163.9 787.4,161.7 788.0,162.1 788.8,161.5 790.1,159.6 790.3,157.0 791.5,160.0 792.6,160.3 792.8,160.6 794.2,153.2 795.5,151.9 795.6,152.3 796.9,154.4 797.9,156.3 798.2,155.7 799.6,157.2 800.1,156.2 800.9,147.9 801.6,141.9" stroke="#127fbf"/>
<polyline points="307.2,180.0 308.6,180.0 309.9,180.0 311.3,180.0 312.6,180.0 314.0,180.0 315.3,180.0 316.7,180.0 318.0,180.0 319.4,180.0 320.7,180.0 322.1,180.0 323.4,180.0 324.8,180.0 326.1,180.0 327.5,180.0 328.8,180.0 330.2,180.0 331.5,180.0 332.9,180.0 334.3,180.0 335.6,180.0 337.0,180.0 338.3,180.0 339.7,180.0 341.0,180.0 342.4,180.0 343.7,180.0 345.1,180.0 346.4,180.0 347.8,180.0 349.1,180.0 350.5,180.0 351.8,180.0 353.2,180.0 354.5,180.0 355.9,180.0 357.2,180.0 358.6,180.0 360.0,180.0 361.3,180.0 362.7,180.0 364.0,180.0 365.4,180.0 366.7,180.0 368.1,180.0 369.4,180.0 370.8,180.0 372.1,180.0 373.5,180.0 374.8,180.0 376.2,180.0 377.5,180.0 378.9,180.0 380.2,180.0 381.6,180.0 383.0,180.0 384.3,180.0 385.7,180.0 387.0,180.0 388.4,180.0 389.7,180.0 391.1,180.0 392.4,180.0 393.8,180.0 395.1,180.0 396.5,180.0 397.8,180.0 399.2,180.0 400.5,180.0 401.9,180.0 403.2,180.0 404.6,180.0 405.9,180.0 407.3,180.0 408.7,180.0 410.0,180.0 411.4,180.0 412.7,180.0 414.1,180.0 415.4,180.0 416.8,180.0 418.1,180.0 419.5,180.0 420.8,180.0 422.2,180.0 423.5,180.0 424.9,180.0 426.2,180.0 427.6,180.0 428.9,180.0 430.3,180.0 431.6,180.0 433.0,180.0 434.4,180.0 435.7,180.0 437.1,180.0 438.4,180.0 439.8,180.0 441.1,180.0 442.5,180.0 443.8,180.0 445.2,180.0 446.5,180.0 447.9,180.0 449.2,180.0 450.6,180.0 451.9,180.0 453.3,180.0 454.6,180.0 456.0,180.0 457.3,180.0 458.7,180.0 460.1,180.0 461.4,180.0 462.8,180.0 464.1,180.0 465.5,180.0 466.8,180.0 468.2,180.0 469.5,180.0 470.9,180.0 472.2,180.0 473.6,180.0 474.9,180.0 476.3,180.0 477.6,180.0 479.0,180.0 480.3,180.0 481.7,180.0 483.1,180.0 484.4,180.0 485.8,180.0 487.1,180.0 488.5,180.0 489.8,180.0 491.2,180.0 492.5,180.0 493.9,180.0 495.2,180.0 496.6,180.0 497.9,180.0 499.3,180.0 500.6,180.0 502.0,180.0 503.3,180.0 504.7,180.0 506.0,180.0 507.4,180.0 508.8,180.0 510.1,180.0 511.5,180.0 512.5,180.0 512.8,174.6 514.2,146.4 515.2,127.9 515.5,131.6 516.9,136.4 517.0,137.4 518.2,132.9 519.3,133.3 519.6,134.0 520.9,129.5 522.3,128.7 523.6,126.9 523.8,130.0 524.6,138.9 525.0,138.3 526.3,139.1 527.7,132.0 529.0,130.1 529.1,125.4 530.4,128.4 531.7,127.4 533.1,122.5 533.6,124.1 534.5,124.6 535.8,130.4 537.2,132.3 537.4,131.0 538.5,128.4 539.9,125.4 541.2,124.1 542.6,116.5 543.9,123.4 545.3,128.5 545.7,131.5 546.6,127.1 548.0,125.8 549.3,121.7 550.2,118.2 550.7,122.4 552.0,121.8 553.4,123.0 554.7,118.4 556.1,114.2 557.0,106.9 557.4,110.9 558.8,126.5 559.2,133.1 560.2,122.2 561.5,118.2 562.9,108.2 563.0,112.1 564.2,112.3 565.6,111.0 566.0,111.3 566.9,125.3 568.2,137.0 568.3,133.6 569.6,124.2 571.0,117.0 571.2,115.5 572.3,116.2 573.7,110.0 574.3,107.6 575.0,114.9 576.4,124.8 577.3,128.3 577.7,123.4 579.1,123.0 579.5,117.7 580.4,120.1 581.8,118.9 583.2,119.7 583.3,119.2 584.5,119.7 585.9,126.4 587.1,128.1 587.2,131.6 588.6,135.6 589.9,136.8 591.3,147.0 591.6,141.6 592.6,137.2 594.0,134.6 595.3,125.7 596.7,126.9 598.0,130.1 599.4,124.1 600.6,124.9 600.7,123.9 602.1,123.9 603.4,121.6 604.4,124.7 604.8,125.3 606.1,125.6 607.5,131.6 608.9,126.2 610.2,132.4 610.4,129.2 611.6,134.2 612.9,135.6 614.3,136.2 615.6,132.9 615.7,135.6 617.0,135.6 618.3,132.0 619.4,131.4 619.7,129.0 621.0,130.6 622.3,128.2 622.4,133.0 623.7,135.0 625.1,140.6 625.3,140.9 626.4,130.4 627.8,122.3 628.3,118.0 629.1,119.2 630.5,123.8 631.3,131.9 631.8,129.7 632.8,138.8 633.2,134.1 634.3,126.9 634.6,129.8 635.9,122.8 636.3,119.3 637.3,126.0 638.1,131.0 638.6,134.6 640.0,135.9 640.3,137.4 641.3,135.9 642.7,129.2 643.3,126.1 644.0,126.2 645.4,129.5 645.6,129.1 646.7,127.2 648.1,123.9 648.6,120.8 649.4,121.4 650.8,128.4 650.9,130.7 652.1,134.7 653.5,135.7 653.9,133.5 654.8,128.2 656.2,123.4 656.4,120.7 657.5,128.8 658.4,132.2 658.9,128.3 660.3,125.7 660.7,122.8 661.6,128.7 663.0,139.9 663.4,141.7 664.3,138.4 665.2,132.2 665.7,131.6 666.7,132.6 667.0,135.4 668.4,127.8 668.9,120.9 669.7,121.9 671.1,133.6 672.4,135.4 672.7,139.8 673.8,126.5 675.0,117.5 675.1,118.9 676.5,119.0 676.9,125.4 677.8,116.5 679.2,96.1 679.5,98.9 680.5,97.7 681.7,109.3 681.9,110.4 683.3,100.4 684.6,92.9 684.7,92.2 686.0,98.3 687.3,100.7 688.5,113.0 688.7,110.1 690.0,115.7 691.4,117.9 691.5,126.7 692.7,111.2 694.1,99.1 694.5,94.1 695.4,97.4 696.8,107.4 698.1,93.3 699.0,89.5 699.5,94.7 700.8,111.2 701.0,114.7 702.2,105.1 703.5,88.7 704.0,88.1 704.9,84.1 706.2,90.5 707.0,92.8 707.6,94.2 709.0,98.2 710.3,101.0 711.7,96.5 713.0,89.0 714.4,88.0 715.7,92.1 716.0,94.1 717.1,91.4 718.4,97.4 719.8,97.7 720.1,103.1 721.1,99.8 722.5,82.6 723.0,79.2 723.8,74.5 725.2,74.2 726.5,72.3 727.9,69.0 729.2,68.7 730.0,66.2 730.6,69.3 731.9,65.2 733.3,68.1 734.7,67.4 736.0,64.9 737.4,64.4 738.7,68.6 740.1,62.0 741.4,67.7 742.8,64.6 744.1,64.3 745.5,65.9 746.8,66.0 748.2,62.5 749.5,64.4 750.9,65.4 752.2,70.4 753.6,68.0 754.9,63.8 756.3,66.0 757.6,68.5 759.0,67.8 760.4,67.0 761.7,64.9 763.1,65.5 764.4,64.2 765.8,68.2 767.1,64.2 768.5,67.5 769.8,67.0 771.2,62.6 772.5,66.2 773.9,66.7 775.2,66.8 776.6,67.2 777.9,63.0 779.3,63.4 780.6,64.8 782.0,66.0 783.4,64.1 784.7,66.5 786.1,65.4 787.4,65.5 788.8,66.2 790.1,62.8 791.5,62.5 792.8,63.5 794.2,70.6 795.5,62.4 796.9,64.8 798.2,67.4 799.6,66.4 800.9,63.9 802.0,63.8" stroke="#1f7ae8"/>
<line x1="306.7" y1="179.9" x2="512" y2="179.9" stroke="#6a0ea2" stroke-width="2"/>
</g>
</svg>
<div class="t" style="right:521.5px;text-align:right;top:92.50px;font-size:10px;line-height:12px;color:#6b7075;font-weight:normal;">200</div>

<div class="t" style="right:521.7px;text-align:right;top:137.00px;font-size:10px;line-height:12px;color:#6b7075;font-weight:normal;">100</div>

<div class="t" style="right:521.7px;text-align:right;top:168.00px;font-size:10px;line-height:12px;color:#6b7075;font-weight:normal;">0</div>

<div class="t" style="left:387.5px;top:184.20px;font-size:10px;line-height:12px;color:#6b7075;font-weight:normal;">01</div>

<div class="t" style="left:387.5px;top:192.80px;font-size:10px;line-height:12px;color:#6b7075;font-weight:normal;">Apr</div>

<div class="t" style="left:506px;top:184.20px;font-size:10px;line-height:12px;color:#6b7075;font-weight:normal;">01</div>

<div class="t" style="left:506px;top:192.80px;font-size:10px;line-height:12px;color:#6b7075;font-weight:normal;">Jul</div>

<div class="t" style="left:630.5px;top:184.20px;font-size:10px;line-height:12px;color:#6b7075;font-weight:normal;">01</div>

<div class="t" style="left:628px;top:192.80px;font-size:10px;line-height:12px;color:#6b7075;font-weight:normal;">Oct</div>

<div class="t" style="left:749px;top:184.20px;font-size:10px;line-height:12px;color:#6b7075;font-weight:normal;">01</div>

<div class="t" style="left:744.5px;top:192.80px;font-size:10px;line-height:12px;color:#6b7075;font-weight:normal;">Jan</div>

<div style="position:absolute;left:306.7px;top:216.5px;width:8px;height:8px;border-radius:50%;background:#127fbf;"></div>
<div class="t" style="left:319.2px;top:214.50px;font-size:9.35px;line-height:12px;color:#3c4043;font-weight:normal;">Direct</div>

<div style="position:absolute;left:352px;top:216.5px;width:8px;height:8px;border-radius:50%;background:#1f7ae8;"></div>
<div class="t" style="left:364px;top:214.50px;font-size:9.35px;line-height:12px;color:#3c4043;font-weight:normal;">Organic Search</div>

<div style="position:absolute;left:436.4px;top:216.5px;width:8px;height:8px;border-radius:50%;background:#4f4ef2;"></div>
<div class="t" style="left:448.9px;top:214.50px;font-size:9.35px;line-height:12px;color:#3c4043;font-weight:normal;">Organic Social</div>

<div style="position:absolute;left:518px;top:216.5px;width:8px;height:8px;border-radius:50%;background:#8e3ed6;"></div>
<div class="t" style="left:530.6px;top:214.50px;font-size:9.35px;line-height:12px;color:#3c4043;font-weight:normal;">Organic Video</div>

<div style="position:absolute;left:597.9px;top:216.5px;width:8px;height:8px;border-radius:50%;background:#6a0ea2;"></div>
<div class="t" style="left:610.4px;top:214.50px;font-size:9.35px;line-height:12px;color:#3c4043;font-weight:normal;">Referral</div>

<svg style="position:absolute;left:0;top:0" width="1351" height="598">
<g stroke="#e0e0e0" stroke-width="1"><line x1="1047" y1="98" x2="1047" y2="179"/><line x1="1134.7" y1="98" x2="1134.7" y2="179"/><line x1="1222" y1="98" x2="1222" y2="179"/>
<line x1="955" y1="110.5" x2="959" y2="110.5"/><line x1="955" y1="149.5" x2="959" y2="149.5"/></g>
<rect x="958.6" y="98" width="1.3" height="29.6" fill="#1a73e8"/>
<rect x="959" y="131.8" width="7" height="34.7" fill="#1a73e8"/>
</svg>
<div class="t" style="left:879px;top:105.30px;font-size:10.3px;line-height:12px;color:#303134;font-weight:normal;">Organic Video</div>

<div class="t" style="left:879px;top:144.30px;font-size:10.3px;line-height:12px;color:#303134;font-weight:normal;">Referral</div>

<div class="t" style="left:939.3px;width:40px;text-align:center;top:186.60px;font-size:10px;line-height:12px;color:#6b7075;font-weight:normal;">0</div>

<div class="t" style="left:1027.0px;width:40px;text-align:center;top:186.60px;font-size:10px;line-height:12px;color:#6b7075;font-weight:normal;">10K</div>

<div class="t" style="left:1114.7px;width:40px;text-align:center;top:186.60px;font-size:10px;line-height:12px;color:#6b7075;font-weight:normal;">20K</div>

<div class="t" style="left:1202.0px;width:40px;text-align:center;top:186.60px;font-size:10px;line-height:12px;color:#6b7075;font-weight:normal;">30K</div>

<div style="position:absolute;left:303px;top:248px;width:975px;height:1px;background:#e0e0e0;"></div>
<div style="position:absolute;left:303px;top:280px;width:975px;height:1px;background:#e0e0e0;"></div>
<svg style="position:absolute;left:0;top:0" width="400" height="300"><circle cx="314" cy="263" r="4.6" fill="none" stroke="#767b80" stroke-width="2"/><path d="M317.3 266.3 L322.2 271.2" stroke="#767b80" stroke-width="2.1"/></svg>
<div class="t" style="left:331.5px;top:257.20px;font-size:11.3px;line-height:14px;color:#5f6368;font-weight:normal;">Search<span style="font-size:8px">…</span></div>

<div class="t" style="left:1077.5px;top:257.50px;font-size:10.4px;line-height:14px;color:#3c4043;font-weight:normal;">Rows per page:</div>

<div class="t" style="left:1170px;top:256.60px;font-size:11.5px;line-height:14px;color:#5f6368;font-weight:normal;">10</div>

<svg style="position:absolute;left:1192px;top:262px" width="9" height="6"><path d="M0.5 0.5h8l-4 4z" fill="#5f6368"/></svg>
<div class="t" style="left:1235.8px;top:257.50px;font-size:10.4px;line-height:14px;color:#3c4043;font-weight:normal;">1-6 of 6</div>

<svg style="position:absolute;left:334px;top:295px" width="10" height="10" viewBox="0 0 10 10"><path d="M5 1 L1.8 4.2 H4.2 V9 H5.8 V4.2 H8.2 Z" fill="#5f6368"/></svg>
<div class="t" style="left:349.3px;top:293.40px;font-size:11px;line-height:14px;color:#5f6368;font-weight:normal;">Session primary…Channel Group)</div>

<svg style="position:absolute;left:528px;top:298px" width="8" height="5"><path d="M0.5 0.5h7l-3.5 3.6z" fill="#5f6368"/></svg>
<svg style="position:absolute;left:549px;top:294px" width="12" height="12"><path d="M6 1 V11 M1 6 H11" stroke="#1a73e8" stroke-width="1.9"/></svg>
<div style="position:absolute;left:303px;top:409.1px;width:975px;height:29.8px;background:#f8f9fa;"></div>
<div style="position:absolute;left:303px;top:409.1px;width:975px;height:1px;background:#e0e0e0;"></div>
<div style="position:absolute;left:303px;top:438.9px;width:975px;height:29.8px;background:#fff;"></div>
<div style="position:absolute;left:303px;top:438.9px;width:975px;height:1px;background:#e0e0e0;"></div>
<div style="position:absolute;left:303px;top:468.7px;width:975px;height:29.8px;background:#f8f9fa;"></div>
<div style="position:absolute;left:303px;top:468.7px;width:975px;height:1px;background:#e0e0e0;"></div>
<div style="position:absolute;left:303px;top:498.5px;width:975px;height:29.8px;background:#fff;"></div>
<div style="position:absolute;left:303px;top:498.5px;width:975px;height:1px;background:#e0e0e0;"></div>
<div style="position:absolute;left:303px;top:528.3px;width:975px;height:29.8px;background:#f8f9fa;"></div>
<div style="position:absolute;left:303px;top:528.3px;width:975px;height:1px;background:#e0e0e0;"></div>
<div style="position:absolute;left:303px;top:558.1px;width:975px;height:29.8px;background:#fff;"></div>
<div style="position:absolute;left:303px;top:558.1px;width:975px;height:1px;background:#e0e0e0;"></div>
<div class="t" style="left:316.5px;top:417.40px;font-size:11.2px;line-height:14px;color:#202124;font-weight:normal;">1</div>

<div class="t" style="left:348.5px;top:417.40px;font-size:11.2px;line-height:14px;color:#202124;font-weight:normal;">Direct</div>

<div class="t" style="left:316.5px;top:447.20px;font-size:11.2px;line-height:14px;color:#202124;font-weight:normal;">2</div>

<div class="t" style="left:348.5px;top:447.20px;font-size:11.2px;line-height:14px;color:#202124;font-weight:normal;">Organic Search</div>

<div class="t" style="left:316.5px;top:477.00px;font-size:11.2px;line-height:14px;color:#202124;font-weight:normal;">3</div>

<div class="t" style="left:348.5px;top:477.00px;font-size:11.2px;line-height:14px;color:#202124;font-weight:normal;">Organic Social</div>

<div class="t" style="left:316.5px;top:506.80px;font-size:11.2px;line-height:14px;color:#202124;font-weight:normal;">4</div>

<div class="t" style="left:348.5px;top:506.80px;font-size:11.2px;line-height:14px;color:#202124;font-weight:normal;">Organic Video</div>

<div class="t" style="left:316.5px;top:536.60px;font-size:11.2px;line-height:14px;color:#202124;font-weight:normal;">5</div>

<div class="t" style="left:348.5px;top:536.60px;font-size:11.2px;line-height:14px;color:#202124;font-weight:normal;">Referral</div>

<div class="t" style="left:316.5px;top:566.40px;font-size:11.2px;line-height:14px;color:#202124;font-weight:normal;">6</div>

<div class="t" style="left:348.5px;top:566.40px;font-size:11.2px;line-height:14px;color:#202124;font-weight:normal;">Unassigned</div>

<div style="position:absolute;left:577px;top:281px;width:701px;height:310px;overflow:hidden;">
<div class="t" style="right:663.4px;text-align:right;top:10.70px;font-size:11.2px;line-height:14px;color:#3c4043;white-space:nowrap;"><span style="padding-bottom:3.3px;background-image:linear-gradient(90deg,#80868b 64%,rgba(0,0,0,0) 64%);background-size:4.4px 1px;background-repeat:repeat-x;background-position:0 100%;">Engaged</span></div>

<div class="t" style="right:663.4px;text-align:right;top:26.60px;font-size:11.2px;line-height:14px;color:#3c4043;white-space:nowrap;"><span style="padding-bottom:3.3px;background-image:linear-gradient(90deg,#80868b 64%,rgba(0,0,0,0) 64%);background-size:4.4px 1px;background-repeat:repeat-x;background-position:0 100%;">sessions</span></div>

<div class="t" style="right:560.3px;text-align:right;top:10.70px;font-size:11.2px;line-height:14px;color:#3c4043;white-space:nowrap;"><span style="padding-bottom:3.3px;background-image:linear-gradient(90deg,#80868b 64%,rgba(0,0,0,0) 64%);background-size:4.4px 1px;background-repeat:repeat-x;background-position:0 100%;">Average</span></div>

<div class="t" style="right:560.3px;text-align:right;top:26.60px;font-size:11.2px;line-height:14px;color:#3c4043;white-space:nowrap;"><span style="padding-bottom:3.3px;background-image:linear-gradient(90deg,#80868b 64%,rgba(0,0,0,0) 64%);background-size:4.4px 1px;background-repeat:repeat-x;background-position:0 100%;">engagement</span></div>

<div class="t" style="right:560.3px;text-align:right;top:42.50px;font-size:11.2px;line-height:14px;color:#3c4043;white-space:nowrap;"><span style="padding-bottom:3.3px;background-image:linear-gradient(90deg,#80868b 64%,rgba(0,0,0,0) 64%);background-size:4.4px 1px;background-repeat:repeat-x;background-position:0 100%;">time per</span></div>

<div class="t" style="right:560.3px;text-align:right;top:58.40px;font-size:11.2px;line-height:14px;color:#3c4043;white-space:nowrap;"><span style="padding-bottom:3.3px;background-image:linear-gradient(90deg,#80868b 64%,rgba(0,0,0,0) 64%);background-size:4.4px 1px;background-repeat:repeat-x;background-position:0 100%;">session</span></div>

<div class="t" style="right:475.8px;text-align:right;top:10.70px;font-size:11.2px;line-height:14px;color:#3c4043;white-space:nowrap;"><span style="padding-bottom:3.3px;background-image:linear-gradient(90deg,#80868b 64%,rgba(0,0,0,0) 64%);background-size:4.4px 1px;background-repeat:repeat-x;background-position:0 100%;">Engaged</span></div>

<div class="t" style="right:475.8px;text-align:right;top:26.60px;font-size:11.2px;line-height:14px;color:#3c4043;white-space:nowrap;"><span style="padding-bottom:3.3px;background-image:linear-gradient(90deg,#80868b 64%,rgba(0,0,0,0) 64%);background-size:4.4px 1px;background-repeat:repeat-x;background-position:0 100%;">sessions</span></div>

<div class="t" style="right:475.8px;text-align:right;top:42.50px;font-size:11.2px;line-height:14px;color:#3c4043;white-space:nowrap;"><span style="padding-bottom:3.3px;background-image:linear-gradient(90deg,#80868b 64%,rgba(0,0,0,0) 64%);background-size:4.4px 1px;background-repeat:repeat-x;background-position:0 100%;">per user</span></div>

<div class="t" style="right:395.7px;text-align:right;top:10.70px;font-size:11.2px;line-height:14px;color:#3c4043;white-space:nowrap;"><span style="padding-bottom:3.3px;background-image:linear-gradient(90deg,#80868b 64%,rgba(0,0,0,0) 64%);background-size:4.4px 1px;background-repeat:repeat-x;background-position:0 100%;">Events</span></div>

<div class="t" style="right:395.7px;text-align:right;top:26.60px;font-size:11.2px;line-height:14px;color:#3c4043;white-space:nowrap;"><span style="padding-bottom:3.3px;background-image:linear-gradient(90deg,#80868b 64%,rgba(0,0,0,0) 64%);background-size:4.4px 1px;background-repeat:repeat-x;background-position:0 100%;">per</span></div>

<div class="t" style="right:395.7px;text-align:right;top:42.50px;font-size:11.2px;line-height:14px;color:#3c4043;white-space:nowrap;"><span style="padding-bottom:3.3px;background-image:linear-gradient(90deg,#80868b 64%,rgba(0,0,0,0) 64%);background-size:4.4px 1px;background-repeat:repeat-x;background-position:0 100%;">session</span></div>

<div class="t" style="right:292.5px;text-align:right;top:10.70px;font-size:11.2px;line-height:14px;color:#3c4043;white-space:nowrap;"><span style="padding-bottom:3.3px;background-image:linear-gradient(90deg,#80868b 64%,rgba(0,0,0,0) 64%);background-size:4.4px 1px;background-repeat:repeat-x;background-position:0 100%;">Engagement</span></div>

<div class="t" style="right:292.5px;text-align:right;top:26.60px;font-size:11.2px;line-height:14px;color:#3c4043;white-space:nowrap;"><span style="padding-bottom:3.3px;background-image:linear-gradient(90deg,#80868b 64%,rgba(0,0,0,0) 64%);background-size:4.4px 1px;background-repeat:repeat-x;background-position:0 100%;">rate</span></div>

<div class="t" style="right:181.0px;text-align:right;top:10.70px;font-size:11.2px;line-height:14px;color:#3c4043;white-space:nowrap;"><span style="padding-bottom:3.3px;background-image:linear-gradient(90deg,#80868b 64%,rgba(0,0,0,0) 64%);background-size:4.4px 1px;background-repeat:repeat-x;background-position:0 100%;">Event count</span></div>

<div class="t" style="right:196.8px;text-align:right;top:28.00px;font-size:11.2px;line-height:14px;color:#3c4043;font-weight:normal;white-space:nowrap;">All events</div>

<svg style="position:absolute;left:514.5999999999999px;top:33px" width="8" height="5"><path d="M0.5 0.5h7l-3.5 3.6z" fill="#5f6368"/></svg>
<div class="t" style="right:56.3px;text-align:right;top:10.70px;font-size:11.2px;line-height:14px;color:#3c4043;white-space:nowrap;"><span style="padding-bottom:3.3px;background-image:linear-gradient(90deg,#80868b 64%,rgba(0,0,0,0) 64%);background-size:4.4px 1px;background-repeat:repeat-x;background-position:0 100%;">Conversions</span></div>

<div class="t" style="right:73.3px;text-align:right;top:28.00px;font-size:11.2px;line-height:14px;color:#3c4043;font-weight:normal;white-space:nowrap;">All events</div>

<svg style="position:absolute;left:638px;top:33px" width="8" height="5"><path d="M0.5 0.5h7l-3.5 3.6z" fill="#5f6368"/></svg>
<div class="t" style="right:663.4px;text-align:right;top:91.00px;font-size:11.2px;line-height:14px;color:#202124;font-weight:normal;white-space:nowrap;-webkit-text-stroke:0.15px #202124;">50,010</div>

<div class="t" style="right:663.4px;text-align:right;top:107.80px;font-size:10px;line-height:14px;color:#4d5156;font-weight:normal;white-space:nowrap;">100% of total</div>

<div class="t" style="right:560.3px;text-align:right;top:91.00px;font-size:11.2px;line-height:14px;color:#202124;font-weight:normal;white-space:nowrap;-webkit-text-stroke:0.15px #202124;">59s</div>

<div class="t" style="right:560.3px;text-align:right;top:107.80px;font-size:9.6px;line-height:14px;color:#4d5156;font-weight:normal;white-space:nowrap;">Avg 0%</div>

<div class="t" style="right:475.8px;text-align:right;top:91.00px;font-size:11.2px;line-height:14px;color:#202124;font-weight:normal;white-space:nowrap;-webkit-text-stroke:0.15px #202124;">1.18</div>

<div class="t" style="right:475.8px;text-align:right;top:107.80px;font-size:9.6px;line-height:14px;color:#4d5156;font-weight:normal;white-space:nowrap;">Avg 0%</div>

<div class="t" style="right:395.7px;text-align:right;top:91.00px;font-size:11.2px;line-height:14px;color:#202124;font-weight:normal;white-space:nowrap;-webkit-text-stroke:0.15px #202124;">12.56</div>

<div class="t" style="right:395.7px;text-align:right;top:107.80px;font-size:9.6px;line-height:14px;color:#4d5156;font-weight:normal;white-space:nowrap;">Avg 0%</div>

<div class="t" style="right:292.5px;text-align:right;top:91.00px;font-size:11.2px;line-height:14px;color:#202124;font-weight:normal;white-space:nowrap;-webkit-text-stroke:0.15px #202124;">90.09%</div>

<div class="t" style="right:292.5px;text-align:right;top:107.80px;font-size:9.6px;line-height:14px;color:#4d5156;font-weight:normal;white-space:nowrap;">Avg 0%</div>

<div class="t" style="right:169.0px;text-align:right;top:91.00px;font-size:11.2px;line-height:14px;color:#202124;font-weight:normal;white-space:nowrap;-webkit-text-stroke:0.15px #202124;">697,322</div>

<div class="t" style="right:169.0px;text-align:right;top:107.80px;font-size:10px;line-height:14px;color:#4d5156;font-weight:normal;white-space:nowrap;">100% of total</div>

<div class="t" style="right:45.8px;text-align:right;top:91.00px;font-size:11.2px;line-height:14px;color:#202124;font-weight:normal;white-space:nowrap;-webkit-text-stroke:0.15px #202124;">54,892.00</div>

<div class="t" style="right:45.8px;text-align:right;top:107.80px;font-size:10px;line-height:14px;color:#4d5156;font-weight:normal;white-space:nowrap;">100% of total</div>

<div class="t" style="right:-51.5px;text-align:right;top:91.00px;font-size:11.2px;line-height:14px;color:#202124;font-weight:normal;white-space:nowrap;-webkit-text-stroke:0.15px #202124;">₹1,557,862.53</div>

<div class="t" style="right:-51.5px;text-align:right;top:107.80px;font-size:10px;line-height:14px;color:#4d5156;font-weight:normal;white-space:nowrap;">100% of total</div>

<div class="t" style="right:663.4px;text-align:right;top:136.40px;font-size:11.2px;line-height:14px;color:#202124;font-weight:normal;white-space:nowrap;">9,491</div>

<div class="t" style="right:560.3px;text-align:right;top:136.40px;font-size:11.2px;line-height:14px;color:#202124;font-weight:normal;white-space:nowrap;">1m 21s</div>

<div class="t" style="right:475.8px;text-align:right;top:136.40px;font-size:11.2px;line-height:14px;color:#202124;font-weight:normal;white-space:nowrap;">1.27</div>

<div class="t" style="right:395.7px;text-align:right;top:136.40px;font-size:11.2px;line-height:14px;color:#202124;font-weight:normal;white-space:nowrap;">15.68</div>

<div class="t" style="right:292.5px;text-align:right;top:136.40px;font-size:11.2px;line-height:14px;color:#202124;font-weight:normal;white-space:nowrap;">90.3%</div>

<div class="t" style="right:169.0px;text-align:right;top:136.40px;font-size:11.2px;line-height:14px;color:#202124;font-weight:normal;white-space:nowrap;">164,862</div>

<div class="t" style="right:45.8px;text-align:right;top:136.40px;font-size:11.2px;line-height:14px;color:#202124;font-weight:normal;white-space:nowrap;">12,450.00</div>

<div class="t" style="right:-52.0px;text-align:right;top:136.40px;font-size:11.2px;line-height:14px;color:#202124;font-weight:normal;white-space:nowrap;">₹652,314.56</div>

<div class="t" style="right:663.4px;text-align:right;top:166.20px;font-size:11.2px;line-height:14px;color:#202124;font-weight:normal;white-space:nowrap;">38,653</div>

<div class="t" style="right:560.3px;text-align:right;top:166.20px;font-size:11.2px;line-height:14px;color:#202124;font-weight:normal;white-space:nowrap;">49s</div>

<div class="t" style="right:475.8px;text-align:right;top:166.20px;font-size:11.2px;line-height:14px;color:#202124;font-weight:normal;white-space:nowrap;">1.13</div>

<div class="t" style="right:395.7px;text-align:right;top:166.20px;font-size:11.2px;line-height:14px;color:#202124;font-weight:normal;white-space:nowrap;">11.10</div>

<div class="t" style="right:292.5px;text-align:right;top:166.20px;font-size:11.2px;line-height:14px;color:#202124;font-weight:normal;white-space:nowrap;">90.21%</div>

<div class="t" style="right:169.0px;text-align:right;top:166.20px;font-size:11.2px;line-height:14px;color:#202124;font-weight:normal;white-space:nowrap;">475,568</div>

<div class="t" style="right:45.8px;text-align:right;top:166.20px;font-size:11.2px;line-height:14px;color:#202124;font-weight:normal;white-space:nowrap;">40,603.00</div>

<div class="t" style="right:-52.0px;text-align:right;top:166.20px;font-size:11.2px;line-height:14px;color:#202124;font-weight:normal;white-space:nowrap;">₹652,314.56</div>

<div class="t" style="right:663.4px;text-align:right;top:196.00px;font-size:11.2px;line-height:14px;color:#202124;font-weight:normal;white-space:nowrap;">124</div>

<div class="t" style="right:560.3px;text-align:right;top:196.00px;font-size:11.2px;line-height:14px;color:#202124;font-weight:normal;white-space:nowrap;">1m 16s</div>

<div class="t" style="right:475.8px;text-align:right;top:196.00px;font-size:11.2px;line-height:14px;color:#202124;font-weight:normal;white-space:nowrap;">1.00</div>

<div class="t" style="right:395.7px;text-align:right;top:196.00px;font-size:11.2px;line-height:14px;color:#202124;font-weight:normal;white-space:nowrap;">17.19</div>

<div class="t" style="right:292.5px;text-align:right;top:196.00px;font-size:11.2px;line-height:14px;color:#202124;font-weight:normal;white-space:nowrap;">68.51%</div>

<div class="t" style="right:169.0px;text-align:right;top:196.00px;font-size:11.2px;line-height:14px;color:#202124;font-weight:normal;white-space:nowrap;">3,112</div>

<div class="t" style="right:45.8px;text-align:right;top:196.00px;font-size:11.2px;line-height:14px;color:#202124;font-weight:normal;white-space:nowrap;">137.00</div>

<div class="t" style="right:663.4px;text-align:right;top:225.80px;font-size:11.2px;line-height:14px;color:#202124;font-weight:normal;white-space:nowrap;">5</div>

<div class="t" style="right:560.3px;text-align:right;top:225.80px;font-size:11.2px;line-height:14px;color:#202124;font-weight:normal;white-space:nowrap;">30s</div>

<div class="t" style="right:475.8px;text-align:right;top:225.80px;font-size:11.2px;line-height:14px;color:#202124;font-weight:normal;white-space:nowrap;">0.83</div>

<div class="t" style="right:395.7px;text-align:right;top:225.80px;font-size:11.2px;line-height:14px;color:#202124;font-weight:normal;white-space:nowrap;">7.00</div>

<div class="t" style="right:292.5px;text-align:right;top:225.80px;font-size:11.2px;line-height:14px;color:#202124;font-weight:normal;white-space:nowrap;">83.33%</div>

<div class="t" style="right:169.0px;text-align:right;top:225.80px;font-size:11.2px;line-height:14px;color:#202124;font-weight:normal;white-space:nowrap;">42</div>

<div class="t" style="right:45.8px;text-align:right;top:225.80px;font-size:11.2px;line-height:14px;color:#202124;font-weight:normal;white-space:nowrap;">6.00</div>

<div class="t" style="right:663.4px;text-align:right;top:255.60px;font-size:11.2px;line-height:14px;color:#202124;font-weight:normal;white-space:nowrap;">1,834</div>

<div class="t" style="right:560.3px;text-align:right;top:255.60px;font-size:11.2px;line-height:14px;color:#202124;font-weight:normal;white-space:nowrap;">2m 01s</div>

<div class="t" style="right:475.8px;text-align:right;top:255.60px;font-size:11.2px;line-height:14px;color:#202124;font-weight:normal;white-space:nowrap;">2.35</div>

<div class="t" style="right:395.7px;text-align:right;top:255.60px;font-size:11.2px;line-height:14px;color:#202124;font-weight:normal;white-space:nowrap;">24.05</div>

<div class="t" style="right:292.5px;text-align:right;top:255.60px;font-size:11.2px;line-height:14px;color:#202124;font-weight:normal;white-space:nowrap;">84.17%</div>

<div class="t" style="right:169.0px;text-align:right;top:255.60px;font-size:11.2px;line-height:14px;color:#202124;font-weight:normal;white-space:nowrap;">52,412</div>

<div class="t" style="right:45.8px;text-align:right;top:255.60px;font-size:11.2px;line-height:14px;color:#202124;font-weight:normal;white-space:nowrap;">1,672.00</div>

<div class="t" style="right:-52.0px;text-align:right;top:255.60px;font-size:11.2px;line-height:14px;color:#202124;font-weight:normal;white-space:nowrap;">₹252,314.56</div>

<div class="t" style="right:663.4px;text-align:right;top:285.40px;font-size:11.2px;line-height:14px;color:#202124;font-weight:normal;white-space:nowrap;">53</div>

<div class="t" style="right:560.3px;text-align:right;top:285.40px;font-size:11.2px;line-height:14px;color:#202124;font-weight:normal;white-space:nowrap;">40s</div>

<div class="t" style="right:475.8px;text-align:right;top:285.40px;font-size:11.2px;line-height:14px;color:#202124;font-weight:normal;white-space:nowrap;">0.47</div>

<div class="t" style="right:395.7px;text-align:right;top:285.40px;font-size:11.2px;line-height:14px;color:#202124;font-weight:normal;white-space:nowrap;">6.60</div>

<div class="t" style="right:292.5px;text-align:right;top:285.40px;font-size:11.2px;line-height:14px;color:#202124;font-weight:normal;white-space:nowrap;">26.37%</div>

<div class="t" style="right:169.0px;text-align:right;top:285.40px;font-size:11.2px;line-height:14px;color:#202124;font-weight:normal;white-space:nowrap;">1,326</div>

<div class="t" style="right:45.8px;text-align:right;top:285.40px;font-size:11.2px;line-height:14px;color:#202124;font-weight:normal;white-space:nowrap;">24.00</div>

</div>
<div style="position:absolute;left:576px;top:281px;width:1.2px;height:307px;background:#80868b;"></div>
<div style="position:absolute;left:915px;top:283.3px;width:91.8px;height:121px;border:3.5px solid #ff0a3c;border-radius:2.5px;"></div>
<div style="position:absolute;left:250px;top:47px;width:1096px;height:51px;background:#f8f9fa;"></div>
<div style="position:absolute;left:250px;top:97.6px;width:1096px;height:1px;background:linear-gradient(90deg,rgba(208,208,208,0),#d2d2d2 40px);"></div>
<div style="position:absolute;left:278.2px;top:63.2px;width:19px;height:19px;border-radius:50%;background:#1a73e8;color:#fff;font-size:11px;font-weight:bold;line-height:19px;text-align:center;" class="t">A</div>
<div style="position:absolute;left:303px;top:63px;width:17.5px;height:17.5px;border-radius:50%;border:1px dashed #9aa0a6;"></div>
<svg style="position:absolute;left:306px;top:66px" width="13" height="13"><path d="M6.8 2 V11 M2.3 6.5 H11.3" stroke="#3c4043" stroke-width="1.4"/></svg>
<div style="position:absolute;left:342.2px;top:63.5px;width:1px;height:18.5px;background:#dadce0;"></div>
<div class="t" style="left:359px;top:62.70px;font-size:17.65px;line-height:22px;color:#202124;font-weight:normal;">Traffic acquisition: Session primary channel group (Default Channel Group)</div>

<div style="position:absolute;left:950.3px;top:63.2px;width:46.7px;height:22.1px;border:1px solid #dadce0;border-radius:11px;box-sizing:border-box;"></div>
<svg style="position:absolute;left:0;top:0" width="1351" height="100"><circle cx="963.3" cy="73.8" r="6" fill="none" stroke="#188038" stroke-width="1.4"/><path d="M960.2 74 L962.4 76.1 L966.4 71.9" fill="none" stroke="#188038" stroke-width="1.4"/><path d="M980.3 72h8l-4 4z" fill="#5f6368"/></svg>
<div style="position:absolute;left:1001px;top:63px;width:17.5px;height:17.5px;border-radius:50%;border:1px dashed #9aa0a6;"></div>
<svg style="position:absolute;left:0;top:0" width="1351" height="100"><path d="M1010.5 67.3 V76.7 M1005.8 72 H1015.2" stroke="#3c4043" stroke-width="1.5"/></svg>
<div style="position:absolute;left:1044.7px;top:67px;width:41px;height:12.7px;background:#eceef0;"></div>
<div class="t" style="left:1048.5px;top:67.30px;font-size:9.65px;line-height:12px;color:#3c4043;font-weight:normal;-webkit-text-stroke:0.35px #3c4043;">Custom</div>

<div class="t" style="left:1090.6px;top:66.30px;font-size:11.1px;line-height:14px;color:#3c4043;font-weight:normal;">Feb 1, 2023 - Feb 1, 2024</div>

<svg style="position:absolute;left:1229px;top:71px" width="8" height="5"><path d="M0.5 0.5h7l-3.5 3.6z" fill="#5f6368"/></svg>
<div style="position:absolute;left:1247px;top:63.5px;width:1px;height:18px;background:#dadce0;"></div>
<svg style="position:absolute;left:0;top:0" width="1351" height="100">
<path d="M1268.6 66.5 H1259.8 V79.2 H1272.8 V70.5" fill="none" stroke="#5f6368" stroke-width="2" stroke-linejoin="round"/>
<path d="M1266.2 73.2 L1266.8 71 L1272.6 65.2 L1274.4 67 L1268.6 72.8 Z" fill="#5f6368"/>
<rect x="1262" y="71.4" width="1.6" height="5.8" fill="#5f6368"/><rect x="1265.3" y="74" width="1.6" height="3.2" fill="#5f6368"/><rect x="1268.6" y="74.3" width="1.6" height="2.9" fill="#5f6368"/></svg>
<svg style="position:absolute;left:0;top:0" width="1351" height="100">
<circle cx="1300.5" cy="66.8" r="2" fill="none" stroke="#5f6368" stroke-width="1.6"/>
<circle cx="1290.8" cy="72.3" r="2" fill="none" stroke="#5f6368" stroke-width="1.6"/>
<circle cx="1300.5" cy="77.9" r="2" fill="none" stroke="#5f6368" stroke-width="1.6"/>
<path d="M1292.6 71.3 L1298.7 67.8 M1292.6 73.3 L1298.7 76.9" stroke="#5f6368" stroke-width="1.5"/></svg>
<svg style="position:absolute;left:0;top:0" width="1351" height="100">
<path d="M1317.1 77.5 L1323 71.4 L1326.9 75.9 L1332.1 70.7" fill="none" stroke="#5f6368" stroke-width="1.7" stroke-linejoin="round"/>
<circle cx="1317.1" cy="77.5" r="1.7" fill="#5f6368"/><circle cx="1332.1" cy="70.7" r="1.7" fill="#5f6368"/>
<circle cx="1323" cy="71.4" r="1.1" fill="#5f6368"/><circle cx="1326.9" cy="75.9" r="1.1" fill="#5f6368"/>
<path d="M1326.9 65.6 V69.2 M1325.1 67.4 H1328.7" stroke="#5f6368" stroke-width="1.2"/>
<path d="M1317.5 68.3 V70.5 M1316.4 69.4 H1318.6" stroke="#5f6368" stroke-width="0.9"/></svg>
<div style="position:absolute;left:0;top:0;width:1351px;height:5px;background:#0a0226;"></div>
<div style="position:absolute;left:0;top:593px;width:1351px;height:5px;background:#0a0226;"></div>
<div style="position:absolute;left:0;top:0;width:5px;height:598px;background:#0a0226;"></div>
<div style="position:absolute;left:1346px;top:0;width:5px;height:598px;background:#0a0226;"></div>
</body></html>
